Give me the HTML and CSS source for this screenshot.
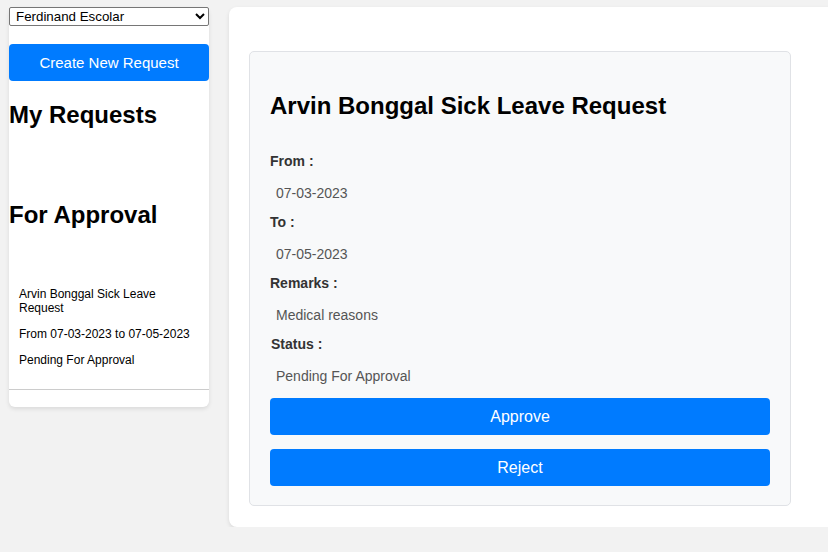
FILE: index.html
```html
<!DOCTYPE html>
<html>
<head>
<meta charset="utf-8">
<link rel="stylesheet" href="styles.css">
</head>
<body>
<div class="layout">
  <aside class="sidebar">
    <select class="user-select">
      <option>Ferdinand Escolar</option>
    </select>
    <button class="btn create-btn">Create New Request</button>
    <h2 class="side-title">My Requests</h2>
    <div class="empty-list"></div>
    <h2 class="side-title">For Approval</h2>
    <div class="req-list">
      <div class="req-item">
        <p>Arvin Bonggal Sick Leave Request</p>
        <p>From 07-03-2023 to 07-05-2023</p>
        <p>Pending For Approval</p>
      </div>
    </div>
  </aside>
  <main class="panel">
    <div class="detail-card">
      <h2 class="detail-title">Arvin Bonggal Sick Leave Request</h2>
      <label class="field-label">From :</label>
      <div class="field-value">07-03-2023</div>
      <label class="field-label">To :</label>
      <div class="field-value">07-05-2023</div>
      <label class="field-label">Remarks :</label>
      <div class="field-value">Medical reasons</div>
      <label class="field-label status-label">Status :</label>
      <div class="field-value">Pending For Approval</div>
      <div class="actions">
        <button class="btn action-btn">Approve</button>
        <button class="btn action-btn">Reject</button>
      </div>
    </div>
  </main>
</div>
</body>
</html>
```
FILE: styles.css
```css
html, body {
  margin: 0;
  padding: 0;
  overflow: hidden;
}
body {
  background: #f2f2f2;
  font-family: "Liberation Sans", Arial, sans-serif;
  color: #000;
}
.layout {
  display: flex;
  align-items: flex-start;
  gap: 20px;
  padding: 7px 0 0 9px;
}
.sidebar {
  width: 200px;
  flex: none;
  background: #fff;
  border-radius: 6px;
  box-shadow: 0 2px 4px rgba(0, 0, 0, 0.1);
  padding-bottom: 17px;
}
.user-select {
  display: block;
  width: 200px;
  height: 19px;
  margin: 0;
  font-family: "Liberation Sans", Arial, sans-serif;
  font-size: 13.33px;
  color: #000;
  background: #fff;
  border: 1px solid #767676;
  border-radius: 2px;
  padding: 0 0 0 2px;
}
.btn {
  display: block;
  width: 100%;
  height: 37px;
  border: none;
  border-radius: 4px;
  background: #007bff;
  color: #fff;
  font-family: "Liberation Sans", Arial, sans-serif;
  font-size: 16px;
  padding: 0;
  cursor: pointer;
}
.create-btn {
  margin-top: 18px;
  font-size: 15px;
}
.side-title {
  margin: 20px 0;
  font-size: 24px;
  line-height: 28px;
  font-weight: bold;
}
.empty-list {
  height: 32px;
}
.req-list {
  padding-top: 16px;
}
.req-item {
  padding: 10px;
  border-bottom: 1px solid #ccc;
  font-size: 12px;
}
.req-item p {
  margin: 12px 0;
}
.panel {
  width: 622px;
  flex: none;
  background: #fff;
  border-radius: 8px;
  box-shadow: 0 2px 4px rgba(0, 0, 0, 0.1);
  padding: 44px 20px 21px 20px;
}
.detail-card {
  width: 542px;
  box-sizing: border-box;
  background: #f8f9fa;
  border: 1px solid #e0e2e6;
  border-radius: 5px;
  padding: 20px 20px 19px 20px;
}
.detail-title {
  margin: 20px 0 33px;
  font-size: 24px;
  line-height: 28px;
  font-weight: bold;
}
.field-label {
  display: block;
  font-size: 14px;
  line-height: 16px;
  font-weight: bold;
  color: #333;
  margin-bottom: 8px;
}
.status-label {
  padding-left: 1px;
}
.field-value {
  font-size: 14px;
  line-height: 16px;
  color: #555;
  padding: 8px 6px;
  margin-bottom: 5px;
}
.actions {
  margin-top: 6px;
  display: flex;
  flex-direction: column;
  gap: 14px;
}
```
